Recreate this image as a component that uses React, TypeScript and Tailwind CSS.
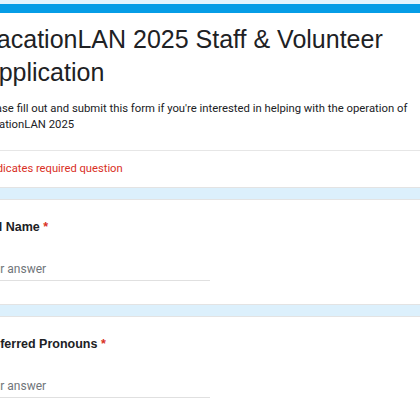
import React from "react";

export default function App() {
  return (
    <div className="w-[420px] h-[420px] overflow-hidden bg-[#dcf0fc]">
      <div className="h-[4px] bg-[#e4f4fd]" />
      <div className="-ml-[44px] w-[520px] flex flex-col">
        <div className="bg-white border-t-[9px] border-[#069de6] border-b border-b-[#e3e3e3]">
          <div className="pl-[24px] pt-[10px] pb-[17px] border-b border-[#e6e6e6]">
            <div className="ml-[2px] text-[25px] leading-[33px] text-[#202124] font-['Liberation_Sans',Arial,sans-serif] w-[480px]">
              VacationLAN 2025 Staff &amp; Volunteer Application
            </div>
            <div className="mt-[12px] text-[11.3px] leading-[16px] text-[#202124] font-['Roboto',sans-serif] w-[450px]">
              Please fill out and submit this form if you're interested in helping with the operation of VacationLAN 2025
            </div>
          </div>
          <div className="pl-[24px] h-[36px] flex items-center text-[11.2px] text-[#d93025] font-['Roboto',sans-serif]">
            * Indicates required question
          </div>
        </div>
        <div className="h-[11px]" />
        <Question label="Full Name" />
        <div className="h-[11px]" />
        <Question label="Preferred Pronouns" />
      </div>
    </div>
  );
}

function Question({ label }: { label: string }) {
  return (
    <div className="bg-white border-y border-[#e3e3e3] h-[106px] pl-[24px] pt-[18px]">
      <div className="text-[12.5px] font-bold text-[#202124] font-['Liberation_Sans',Arial,sans-serif] leading-[18px]">
        {label} <span className="text-[#d93025]">*</span>
      </div>
      <div className="mt-[25px] w-[230px] border-b border-[#e0e0e0] pb-[3px] text-[12px] text-[#70757a] font-['Roboto',sans-serif] leading-[16px]">
        Your answer
      </div>
    </div>
  );
}
